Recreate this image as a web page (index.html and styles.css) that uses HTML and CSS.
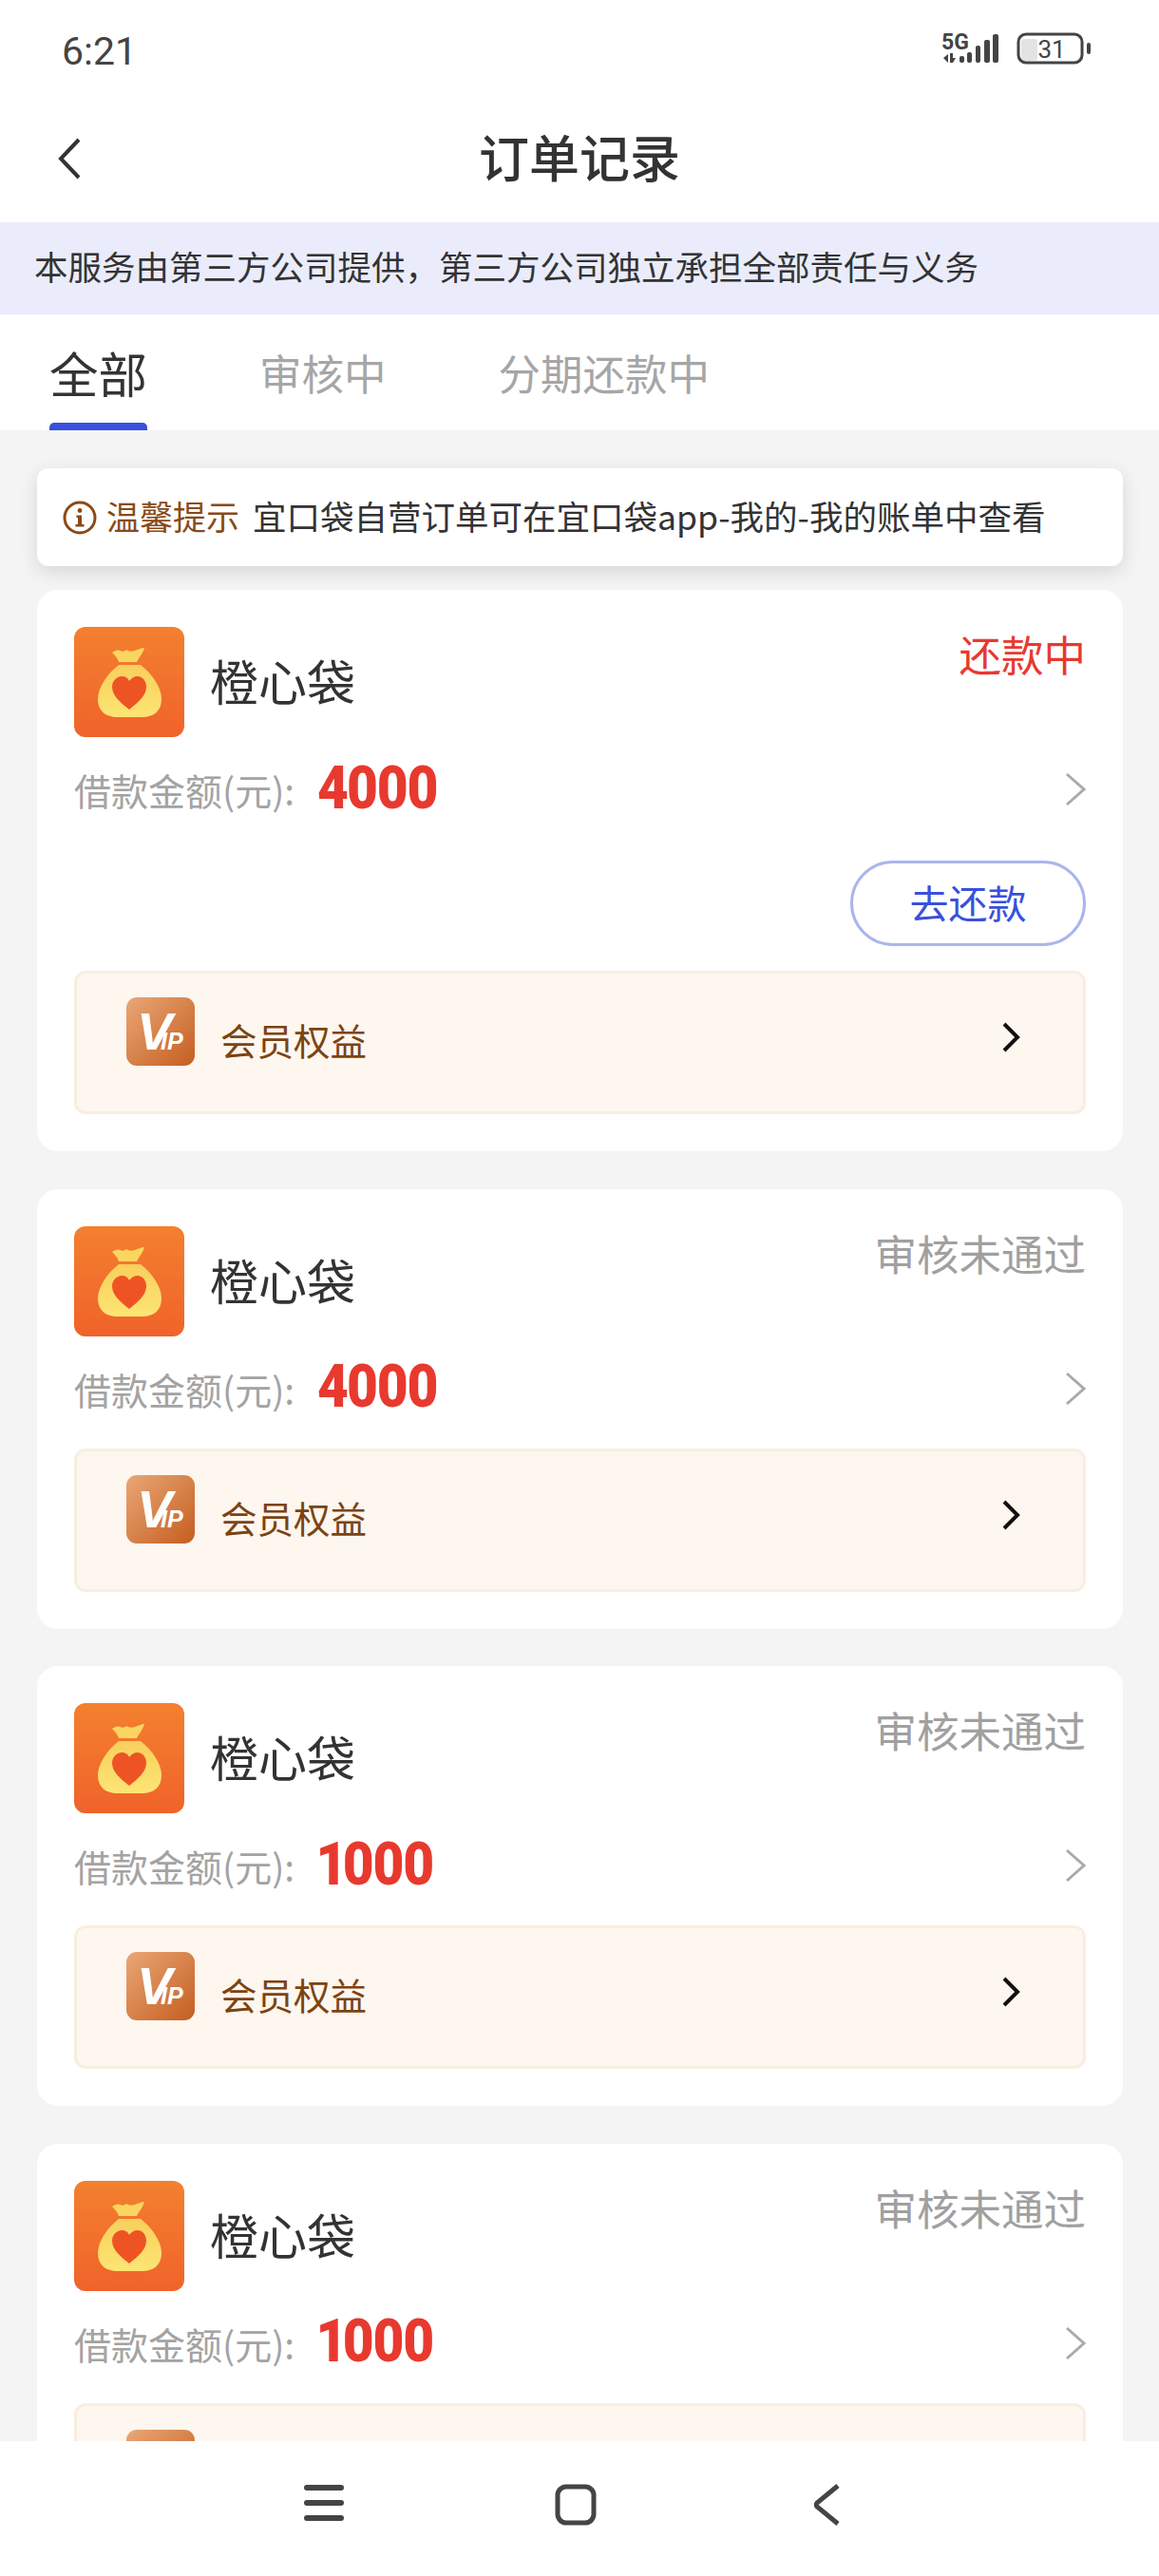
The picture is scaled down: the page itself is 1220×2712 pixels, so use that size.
FILE: index.html
```html
<!DOCTYPE html>
<html lang="zh-CN">
<head>
    <meta charset="UTF-8">
    <meta name="viewport" content="width=device-width, initial-scale=1.0">
    <title>订单记录</title>
    <link rel="stylesheet" href="styles.css">
</head>
<body>
    <svg class="defs" width="0" height="0">
        <defs>
            <linearGradient id="bagBg" x1="0" y1="0" x2="0" y2="1">
                <stop offset="0" stop-color="#f3802f"/>
                <stop offset="1" stop-color="#f0632a"/>
            </linearGradient>
            <linearGradient id="bagBody" x1="0" y1="0" x2="0" y2="1">
                <stop offset="0" stop-color="#f8cf5c"/>
                <stop offset="1" stop-color="#fde574"/>
            </linearGradient>
            <linearGradient id="vipBg" x1="0" y1="0" x2="1" y2="1">
                <stop offset="0" stop-color="#e9a776"/>
                <stop offset="1" stop-color="#c55e20"/>
            </linearGradient>
            <symbol id="bag" viewBox="0 0 116 116">
                <rect width="116" height="116" rx="12" fill="url(#bagBg)"/>
                <path d="M40 27c3-2 6-3 8-2 3 1 5 1 7-1 3 2 6 2 9 1 3-1 7-3 10-3-1 5-5 9-8 15H47c-1-4-4-7-7-10z" fill="#fad660"/>
                <path d="M47 40h23c12 9 22 24 22 36 0 13-9 19-20 19H45c-11 0-20-6-20-19 0-12 10-27 22-36z" fill="url(#bagBody)"/>
                <path d="M58 87C48 79 40 72 40 63c0-6 5-11 10-11 4 0 7 2 8 5 2-3 5-5 9-5 5 0 9 5 9 11 0 9-8 16-18 24z" fill="#ee5423"/>
            </symbol>
            <symbol id="vip" viewBox="0 0 72 72">
                <rect width="72" height="72" rx="11" fill="url(#vipBg)"/>
                <text x="11" y="55" class="vip-v">V</text>
                <text x="36" y="55" class="vip-ip">IP</text>
            </symbol>
        </defs>
    </svg>

    <div class="status-bar">
        <span class="time">6:21</span>
        <svg class="status-icons" width="160" height="48" viewBox="0 -8 160 48">
            <text x="1" y="19" class="net">5G</text>
            <path d="M3 28l5-4v9zM10 23h3v5h3l-3 5h-3z" fill="#444"/>
            <rect x="20" y="26" width="5" height="7" rx="2" fill="#444"/>
            <rect x="28" y="22" width="5" height="11" rx="2" fill="#444"/>
            <rect x="37" y="15" width="5" height="18" rx="2" fill="#444"/>
            <rect x="46" y="9" width="6" height="24" rx="2" fill="#444"/>
            <rect x="55" y="3" width="6" height="30" rx="2" fill="#444"/>
            <rect x="85" y="8" width="17" height="23" rx="3" fill="#e3e3e3"/>
            <rect x="82" y="3" width="67" height="30" rx="8" fill="none" stroke="#444" stroke-width="3"/>
            <rect x="154" y="12" width="4" height="12" rx="2" fill="#444"/>
            <text x="117" y="28" class="batt">31</text>
        </svg>
    </div>

    <header class="title-bar">
        <svg class="back" width="26" height="44" viewBox="0 0 26 44"><path d="M23 2L4 22l19 20" fill="none" stroke="#333" stroke-width="4"/></svg>
        <h1>订单记录</h1>
    </header>

    <div class="banner"><span>本服务由第三方公司提供，第三方公司独立承担全部责任与义务</span></div>

    <nav class="tabs">
        <a class="tab active">全部</a>
        <a class="tab">审核中</a>
        <a class="tab">分期还款中</a>
    </nav>

    <main class="list">
        <div class="notice">
            <svg class="info" width="36" height="36" viewBox="0 0 36 36">
                <circle cx="18" cy="18" r="16" fill="none" stroke="#8a4a17" stroke-width="3"/>
                <circle cx="18" cy="10.500" r="2.400" fill="#8a4a17"/>
                <path d="M14.500 15.500H20V25h2.500v2.500h-9V25H16v-7h-1.500z" fill="#8a4a17"/>
            </svg>
            <span class="notice-tag">温馨提示</span>
            <span class="notice-text">宜口袋自营订单可在宜口袋app-我的-我的账单中查看</span>
        </div>

        <!-- repaying -->
        <section class="card">
            <div class="card-head">
                <svg class="logo" width="116" height="116"><use href="#bag"/></svg>
                <span class="name">橙心袋</span>
                <span class="status red">还款中</span>
            </div>
            <div class="amount-row">
                <span class="label">借款金额(元):</span>
                <span class="amount">4000</span>
                <svg class="arrow" width="22" height="36" viewBox="0 0 22 36"><path d="M2 2l18 16L2 34" fill="none" stroke="#aaa" stroke-width="3"/></svg>
            </div>
            <div class="actions"><button class="pay">去还款</button></div>
            <div class="vip-box">
                <svg class="vip-icon" width="72" height="72"><use href="#vip"/></svg>
                <span class="vip-text">会员权益</span>
                <svg class="vip-arrow" width="20" height="32" viewBox="0 0 20 32"><path d="M3 2l14 14L3 30" fill="none" stroke="#111" stroke-width="4"/></svg>
            </div>
        </section>

        <section class="card">
            <div class="card-head">
                <svg class="logo" width="116" height="116"><use href="#bag"/></svg>
                <span class="name">橙心袋</span>
                <span class="status">审核未通过</span>
            </div>
            <div class="amount-row">
                <span class="label">借款金额(元):</span>
                <span class="amount">4000</span>
                <svg class="arrow" width="22" height="36" viewBox="0 0 22 36"><path d="M2 2l18 16L2 34" fill="none" stroke="#aaa" stroke-width="3"/></svg>
            </div>
            <div class="vip-box">
                <svg class="vip-icon" width="72" height="72"><use href="#vip"/></svg>
                <span class="vip-text">会员权益</span>
                <svg class="vip-arrow" width="20" height="32" viewBox="0 0 20 32"><path d="M3 2l14 14L3 30" fill="none" stroke="#111" stroke-width="4"/></svg>
            </div>
        </section>

        <section class="card">
            <div class="card-head">
                <svg class="logo" width="116" height="116"><use href="#bag"/></svg>
                <span class="name">橙心袋</span>
                <span class="status">审核未通过</span>
            </div>
            <div class="amount-row">
                <span class="label">借款金额(元):</span>
                <span class="amount">1000</span>
                <svg class="arrow" width="22" height="36" viewBox="0 0 22 36"><path d="M2 2l18 16L2 34" fill="none" stroke="#aaa" stroke-width="3"/></svg>
            </div>
            <div class="vip-box">
                <svg class="vip-icon" width="72" height="72"><use href="#vip"/></svg>
                <span class="vip-text">会员权益</span>
                <svg class="vip-arrow" width="20" height="32" viewBox="0 0 20 32"><path d="M3 2l14 14L3 30" fill="none" stroke="#111" stroke-width="4"/></svg>
            </div>
        </section>

        <!-- last card runs under the nav bar, only the top of its vip box shows -->
        <section class="card">
            <div class="card-head">
                <svg class="logo" width="116" height="116"><use href="#bag"/></svg>
                <span class="name">橙心袋</span>
                <span class="status">审核未通过</span>
            </div>
            <div class="amount-row">
                <span class="label">借款金额(元):</span>
                <span class="amount">1000</span>
                <svg class="arrow" width="22" height="36" viewBox="0 0 22 36"><path d="M2 2l18 16L2 34" fill="none" stroke="#aaa" stroke-width="3"/></svg>
            </div>
            <div class="vip-box">
                <svg class="vip-icon" width="72" height="72"><use href="#vip"/></svg>
            </div>
        </section>
    </main>

    <footer class="nav-bar">
        <svg width="42" height="40" viewBox="0 0 42 40"><path d="M3 4h36M3 20h36M3 36h36" stroke="#444" stroke-width="6" stroke-linecap="round"/></svg>
        <svg width="44" height="44" viewBox="0 0 44 44"><rect x="3" y="3" width="38" height="38" rx="9" fill="none" stroke="#444" stroke-width="5"/></svg>
        <svg class="nav-back" width="28" height="44" viewBox="0 0 28 44"><path d="M26 2L4 20c-1 1-1 3 0 4l22 18" fill="none" stroke="#444" stroke-width="5"/></svg>
    </footer>
</body>
</html>
```

FILE: styles.css
```css
body {
    font-family: 'Noto Sans CJK SC', 'Noto Sans', sans-serif;
    margin: 0;
    height: 100vh;
    display: flex;
    flex-direction: column;
    overflow: hidden;
    background-color: #fff;
    color: #333;
}
.defs {
    position: absolute;
}
.vip-v {
    font: italic bold 56px 'Liberation Sans', sans-serif;
    fill: #fff;
}
.vip-ip {
    font: italic bold 25px 'Liberation Sans', sans-serif;
    fill: #fff;
}
.status-bar {
    height: 100px;
    flex: none;
    display: flex;
    align-items: center;
    justify-content: space-between;
    padding: 0 70px 0 65px;
    box-sizing: border-box;
}
.time {
    font: 41px Roboto, sans-serif;
    color: #444;
    margin-top: 8px;
}
.status-icons {
    margin-top: -2px;
}
.net {
    font: bold 23px Roboto, sans-serif;
    fill: #444;
}
.batt {
    font: 26px Roboto, sans-serif;
    fill: #444;
    text-anchor: middle;
}
.title-bar {
    height: 134px;
    flex: none;
    display: flex;
    align-items: center;
    justify-content: center;
    position: relative;
}
.title-bar h1 {
    margin: -6px 0 0;
    font-size: 53px;
    font-weight: 500;
    color: #333;
}
.back {
    position: absolute;
    left: 60px;
    top: 45px;
}
.banner {
    height: 97px;
    flex: none;
    display: flex;
    align-items: center;
    padding-left: 36px;
    background-color: #eaecfb;
    font-size: 35.5px;
    color: #333;
}
.banner span {
    margin-top: -6px;
}
.tabs {
    height: 122px;
    flex: none;
    display: flex;
    align-items: flex-start;
    padding-left: 52px;
    gap: 118px;
    box-sizing: border-box;
}
.tab {
    position: relative;
    height: 122px;
    line-height: 122px;
    font-size: 44.5px;
    color: #a6a6a6;
}
.tab.active {
    font-size: 51.5px;
    color: #333;
}
.tab.active::after {
    content: "";
    position: absolute;
    left: 0;
    right: 0;
    bottom: 0;
    height: 8px;
    border-radius: 5px 5px 0 0;
    background-color: #3a50dc;
}
.list {
    flex: 1;
    min-height: 0;
    overflow: hidden;
    background-color: #f4f4f4;
    padding: 40px 38px 0 39px;
}
.notice {
    height: 103px;
    display: flex;
    align-items: center;
    padding-left: 27px;
    background-color: #fff;
    border-radius: 12px;
    box-shadow: 0 6px 20px rgba(0, 0, 0, 0.12);
    font-size: 35px;
}
.info {
    flex: none;
    margin-right: 10px;
}
.notice-tag {
    color: #8a4a17;
    margin: -5px 14px 0 0;
}
.notice-text {
    color: #333;
    font-size: 35.5px;
    margin-top: -5px;
    white-space: nowrap;
}
.card {
    margin-top: 39.5px;
    padding: 39px;
    background-color: #fff;
    border-radius: 22px;
}
.notice + .card {
    margin-top: 25px;
}
.card-head {
    display: flex;
    align-items: center;
    height: 116px;
}
.logo {
    flex: none;
    margin-right: 27px;
}
.name {
    flex: 1;
    font-size: 51px;
    margin-top: -4px;
    color: #333;
}
.status {
    align-self: flex-start;
    line-height: 56px;
    font-size: 44.5px;
    color: #a0a0a0;
}
.status.red {
    color: #e8392f;
}
.amount-row {
    height: 106px;
    display: flex;
    align-items: center;
}
.label {
    font-size: 39px;
    color: #a3a3a3;
    margin-top: 4px;
}
.amount {
    flex: 1;
    margin-left: 24px;
    font: 900 63px Roboto, sans-serif;
    font-variant-numeric: proportional-nums;
    letter-spacing: -2.5px;
    transform: scaleX(0.9);
    transform-origin: left center;
    color: #e8392f;
}
.arrow {
    margin-top: 4px;
}
.actions {
    display: flex;
    justify-content: flex-end;
    margin: 24px 0 26px;
}
.pay {
    width: 248px;
    height: 90px;
    border: 3px solid #aab5ea;
    border-radius: 45px;
    background-color: #fff;
    font-family: inherit;
    font-size: 41px;
    padding: 0 0 4px;
    color: #3a50dc;
}
.amount-row + .vip-box {
    margin-top: 12px;
}
.vip-box {
    height: 151px;
    box-sizing: border-box;
    display: flex;
    align-items: flex-start;
    padding: 25px 66px 0 52px;
    background-color: #fdf7f0;
    border: 3px solid #f9eee0;
    border-radius: 12px;
}
.vip-icon {
    flex: none;
}
.vip-text {
    flex: 1;
    margin-left: 27px;
    margin-top: 17px;
    font-size: 38.5px;
    line-height: 54px;
    color: #7d4310;
}
.vip-arrow {
    margin-top: 26px;
}
.nav-bar {
    height: 142px;
    flex: none;
    display: flex;
    align-items: flex-start;
    padding: 45px 0 0 320px;
    box-sizing: border-box;
    gap: 222px;
    background-color: #fff;
}
.nav-back {
    margin-left: 6px;
}
```
